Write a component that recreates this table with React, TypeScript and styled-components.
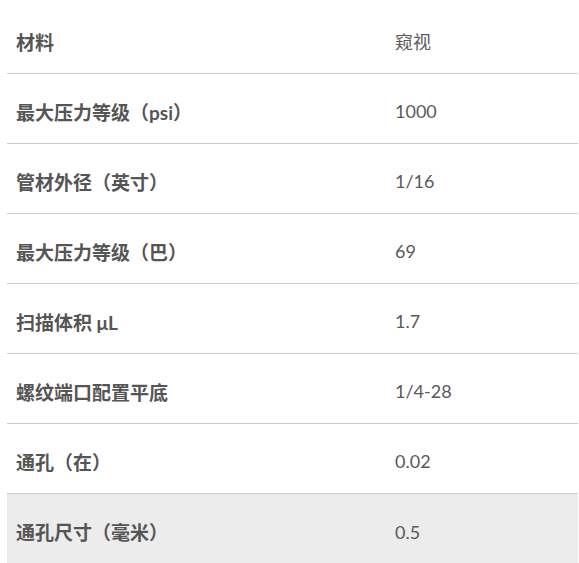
import React from "react";
import styled, { createGlobalStyle } from "styled-components";

const GlobalStyle = createGlobalStyle`
  html, body {
    margin: 0;
    padding: 0;
    background: #ffffff;
  }
  body {
    font-family: Lato, "Noto Sans CJK SC", sans-serif;
  }
`;

interface SpecRow {
  label: string;
  value: string;
}

const rows: SpecRow[] = [
  { label: "材料", value: "窥视" },
  { label: "最大压力等级（psi）", value: "1000" },
  { label: "管材外径（英寸）", value: "1/16" },
  { label: "最大压力等级（巴）", value: "69" },
  { label: "扫描体积 μL", value: "1.7" },
  { label: "螺纹端口配置平底", value: "1/4-28" },
  { label: "通孔（在）", value: "0.02" },
  { label: "通孔尺寸（毫米）", value: "0.5" },
];

const Page = styled.div`
  padding: 4px 1px 0 7px;
`;

const SpecTable = styled.div`
  display: flex;
  flex-direction: column;
  width: 100%;
`;

const Row = styled.div<{ $shaded?: boolean; $last?: boolean }>`
  display: grid;
  grid-template-columns: 379px 1fr;
  align-items: center;
  height: 70px;
  padding-top: 5px;
  box-sizing: border-box;
  border-bottom: ${({ $last }) => ($last ? "none" : "1px solid #cccccc")};
  background-color: ${({ $shaded }) => ($shaded ? "#ececec" : "transparent")};
`;

const Label = styled.div`
  padding-left: 9px;
  font-size: 19px;
  font-weight: 700;
  color: #555555;
`;

const Value = styled.div`
  padding-left: 9px;
  font-size: 18px;
  font-weight: 400;
  color: #5a5a5a;
`;

const App: React.FC = () => (
  <Page>
    <GlobalStyle />
    <SpecTable>
      {rows.map((row, i) => (
        <Row
          key={row.label}
          $shaded={i === rows.length - 1}
          $last={i === rows.length - 1}
        >
          <Label>{row.label}</Label>
          <Value>{row.value}</Value>
        </Row>
      ))}
    </SpecTable>
  </Page>
);

export default App;
